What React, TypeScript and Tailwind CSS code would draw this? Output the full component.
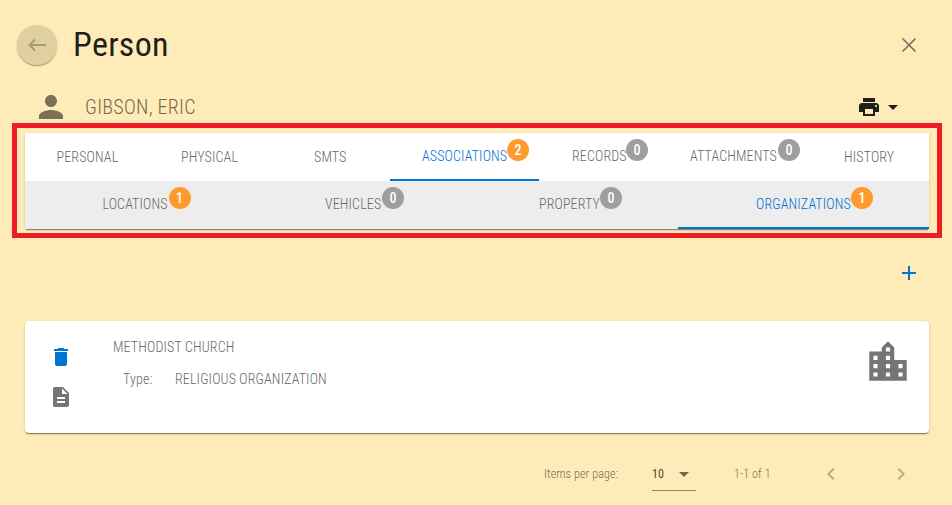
import type { ReactNode } from "react";

type Tab = { label: string; width: string; textWidth: string; badge?: number; active?: boolean; raised?: boolean };

const primaryTabs: Tab[] = [
  { label: "PERSONAL", width: "w-[124px]", textWidth: "w-[61px]" },
  { label: "PHYSICAL", width: "w-[121px]", textWidth: "w-[57px]" },
  { label: "SMTS", width: "w-[120px]", textWidth: "w-[32px]" },
  { label: "ASSOCIATIONS", width: "w-[149px]", textWidth: "w-[85px]", badge: 2, active: true, raised: true },
  { label: "RECORDS", width: "w-[120px]", textWidth: "w-[54px]", badge: 0, raised: true },
  { label: "ATTACHMENTS", width: "w-[150px]", textWidth: "w-[88px]", badge: 0, raised: true },
  { label: "HISTORY", width: "w-[120px]", textWidth: "w-[50px]" },
];

const secondaryTabs: Tab[] = [
  { label: "LOCATIONS", width: "w-[221px]", textWidth: "w-[66px]", badge: 1, raised: true },
  { label: "VEHICLES", width: "w-[215px]", textWidth: "w-[57px]", badge: 0, raised: true },
  { label: "PROPERTY", width: "w-[217px]", textWidth: "w-[61px]", badge: 0, raised: true },
  { label: "ORGANIZATIONS", width: "w-[251px]", textWidth: "w-[95px]", badge: 1, active: true, raised: true },
];

function Icon({ d, className }: { d: string; className: string }) {
  return (
    <svg viewBox="0 0 24 24" fill="currentColor" className={`block shrink-0 ${className}`}>
      <path d={d} />
    </svg>
  );
}

function Text({ children, className }: { children: ReactNode; className: string }) {
  return <span className={`block whitespace-nowrap ${className}`}>{children}</span>;
}

function TabItem({ tab }: { tab: Tab }) {
  return (
    <div
      className={`flex h-12 shrink-0 items-center justify-center border-b-2 ${tab.width} ${
        tab.active ? "border-[#0074d0] text-[#006fce]" : "border-transparent text-[#686868]"
      }`}
    >
      <div className={`relative ${tab.textWidth} ${tab.raised ? "" : "pt-0.5"}`}>
        <Text className="text-[14px] leading-5 tracking-[0.14px]">{tab.label}</Text>
        {tab.badge !== undefined && (
          <span
            className={`absolute left-full -top-[7px] flex size-[22px] items-center justify-center rounded-full text-[14px] font-medium text-white ${
              tab.badge > 0 ? "bg-[#ff9a2e]" : "bg-[#9e9e9e]"
            }`}
          >
            {tab.badge}
          </span>
        )}
      </div>
    </div>
  );
}

export default function App() {
  return (
    <div className="relative h-[505px] w-[952px] overflow-hidden bg-[#ffebb7] font-['Roboto_Condensed','Roboto',sans-serif] font-light [font-stretch:75%]">
      <header className="flex h-[90px] items-center pl-[17px] pr-9">
        <div className="flex size-10 items-center justify-center rounded-full bg-[#e0cfa1] text-[#a69a78] shadow-[0_2px_1px_-1px_rgba(0,0,0,0.2),0_1px_1px_rgba(0,0,0,0.14),0_1px_3px_rgba(0,0,0,0.12)]">
          <svg viewBox="0 0 24 24" className="size-6" fill="none" stroke="currentColor" strokeWidth="1.9">
            <path d="M21 12H4.5M10 6.5L4.5 12l5.5 5.5" />
          </svg>
        </div>
        <h1 className="-mt-0.5 ml-4 text-[34px] font-normal leading-10 tracking-[0.3px] text-[#211f1b]">
          <Text className="">Person</Text>
        </h1>
        <svg viewBox="0 0 14 14" className="ml-auto size-[14px] text-[#736a53]" fill="none" stroke="currentColor" strokeWidth="1.5">
          <path d="M.5.5l13 13M13.5.5l-13 13" />
        </svg>
      </header>
      <div className="flex h-[43px] items-start pl-[33px] pr-[47px]">
        <Icon className="-mt-px size-9 text-[#7a7058]" d="M12 12c2.21 0 4-1.79 4-4s-1.79-4-4-4-4 1.79-4 4 1.79 4 4 4zm0 2c-2.67 0-8 1.34-8 4v2h16v-2c0-2.66-5.33-4-8-4z" />
        <Text className="ml-4 mt-1 text-[20px] leading-[26px] tracking-[0.28px] text-[#736a53]">GIBSON, ERIC</Text>
        <div className="ml-auto mt-[5px] flex items-center text-[#211f1b]">
          <Icon className="size-6" d="M19 8H5c-1.66 0-3 1.34-3 3v6h4v4h12v-4h4v-6c0-1.66-1.34-3-3-3zm-3 11H8v-5h8v5zm3-7c-.55 0-1-.45-1-1s.45-1 1-1 1 .45 1 1-.45 1-1 1zm-1-9H6v4h12V3z" />
          <Icon className="size-6" d="M7 10l5 5 5-5z" />
        </div>
      </div>
      <nav className="mx-[25px] w-[904px] rounded-[2px] shadow-[0_2px_1px_-1px_rgba(0,0,0,0.3),0_1px_1px_rgba(0,0,0,0.2),0_1px_3px_rgba(0,0,0,0.14)]">
        <div className="flex h-12 bg-white">
          {primaryTabs.map((t) => <TabItem key={t.label} tab={t} />)}
        </div>
        <div className="flex h-12 bg-[#ededed]">
          {secondaryTabs.map((t) => <TabItem key={t.label} tab={t} />)}
        </div>
      </nav>
      <div className="pointer-events-none absolute left-3 top-[123px] h-[115px] w-[930px] border-5 border-[#ee1c25]" />
      <div className="flex h-[92px] justify-end pr-[31px] pt-8">
        <Icon className="size-6 text-[#0074d0]" d="M19 13h-6v6h-2v-6H5v-2h6V5h2v6h6v2z" />
      </div>
      <section className="mx-[25px] flex h-[112px] w-[904px] rounded bg-white text-[14px] tracking-[0.14px] text-[#686868] shadow-[0_2px_1px_-1px_rgba(0,0,0,0.3),0_1px_1px_rgba(0,0,0,0.2),0_1px_3px_rgba(0,0,0,0.14)]">
        <div className="flex w-[88px] flex-col gap-4 pl-6 pt-6">
          <Icon className="size-6 text-[#0074d0]" d="M6 19c0 1.1.9 2 2 2h8c1.1 0 2-.9 2-2V7H6v12zM19 4h-3.5l-1-1h-5l-1 1H5v2h14V4z" />
          <Icon className="size-6 text-[#757575]" d="M14 2H6c-1.1 0-1.99.9-1.99 2L4 20c0 1.1.89 2 1.99 2H18c1.1 0 2-.9 2-2V8l-6-6zm2 16H8v-2h8v2zm0-4H8v-2h8v2zm-3-5V3.5L18.5 9H13z" />
        </div>
        <div className="pt-4">
          <Text className="leading-5">METHODIST CHURCH</Text>
          <div className="ml-[10px] mt-3 flex">
            <Text className="w-[52px] leading-5">Type:</Text>
            <Text className="leading-5">RELIGIOUS ORGANIZATION</Text>
          </div>
        </div>
        <div className="ml-auto pr-4 pt-4">
          <Icon className="size-[50px] text-[#757575]" d="M15 11V5l-3-3-3 3v2H3v14h18V11h-6zm-8 8H5v-2h2v2zm0-4H5v-2h2v2zm0-4H5V9h2v2zm6 8h-2v-2h2v2zm0-4h-2v-2h2v2zm0-4h-2V9h2v2zm0-4h-2V5h2v2zm6 12h-2v-2h2v2zm0-4h-2v-2h2v2z" />
        </div>
      </section>
      <footer className="flex h-[72px] items-center pl-[544px] pt-[9px] text-[12px] tracking-[0.14px] text-[#736a53]">
        <Text className="w-[108px]">Items per page:</Text>
        <div className="mt-px flex h-[33px] w-11 items-center border-b border-[#8f846a] font-normal text-[#4c4636]">
          <Text className="w-5">10</Text>
          <Icon className="size-6 text-[#736a53]" d="M7 10l5 5 5-5z" />
        </div>
        <Text className="ml-[38px] w-[85px]">1-1 of 1</Text>
        <Icon className="size-6 text-[#b9ac86]" d="M15.41 7.41L14 6l-6 6 6 6 1.41-1.41L10.83 12z" />
        <Icon className="ml-[46px] size-6 text-[#b9ac86]" d="M10 6L8.59 7.41 13.17 12l-4.58 4.59L10 18l6-6z" />
      </footer>
    </div>
  );
}
